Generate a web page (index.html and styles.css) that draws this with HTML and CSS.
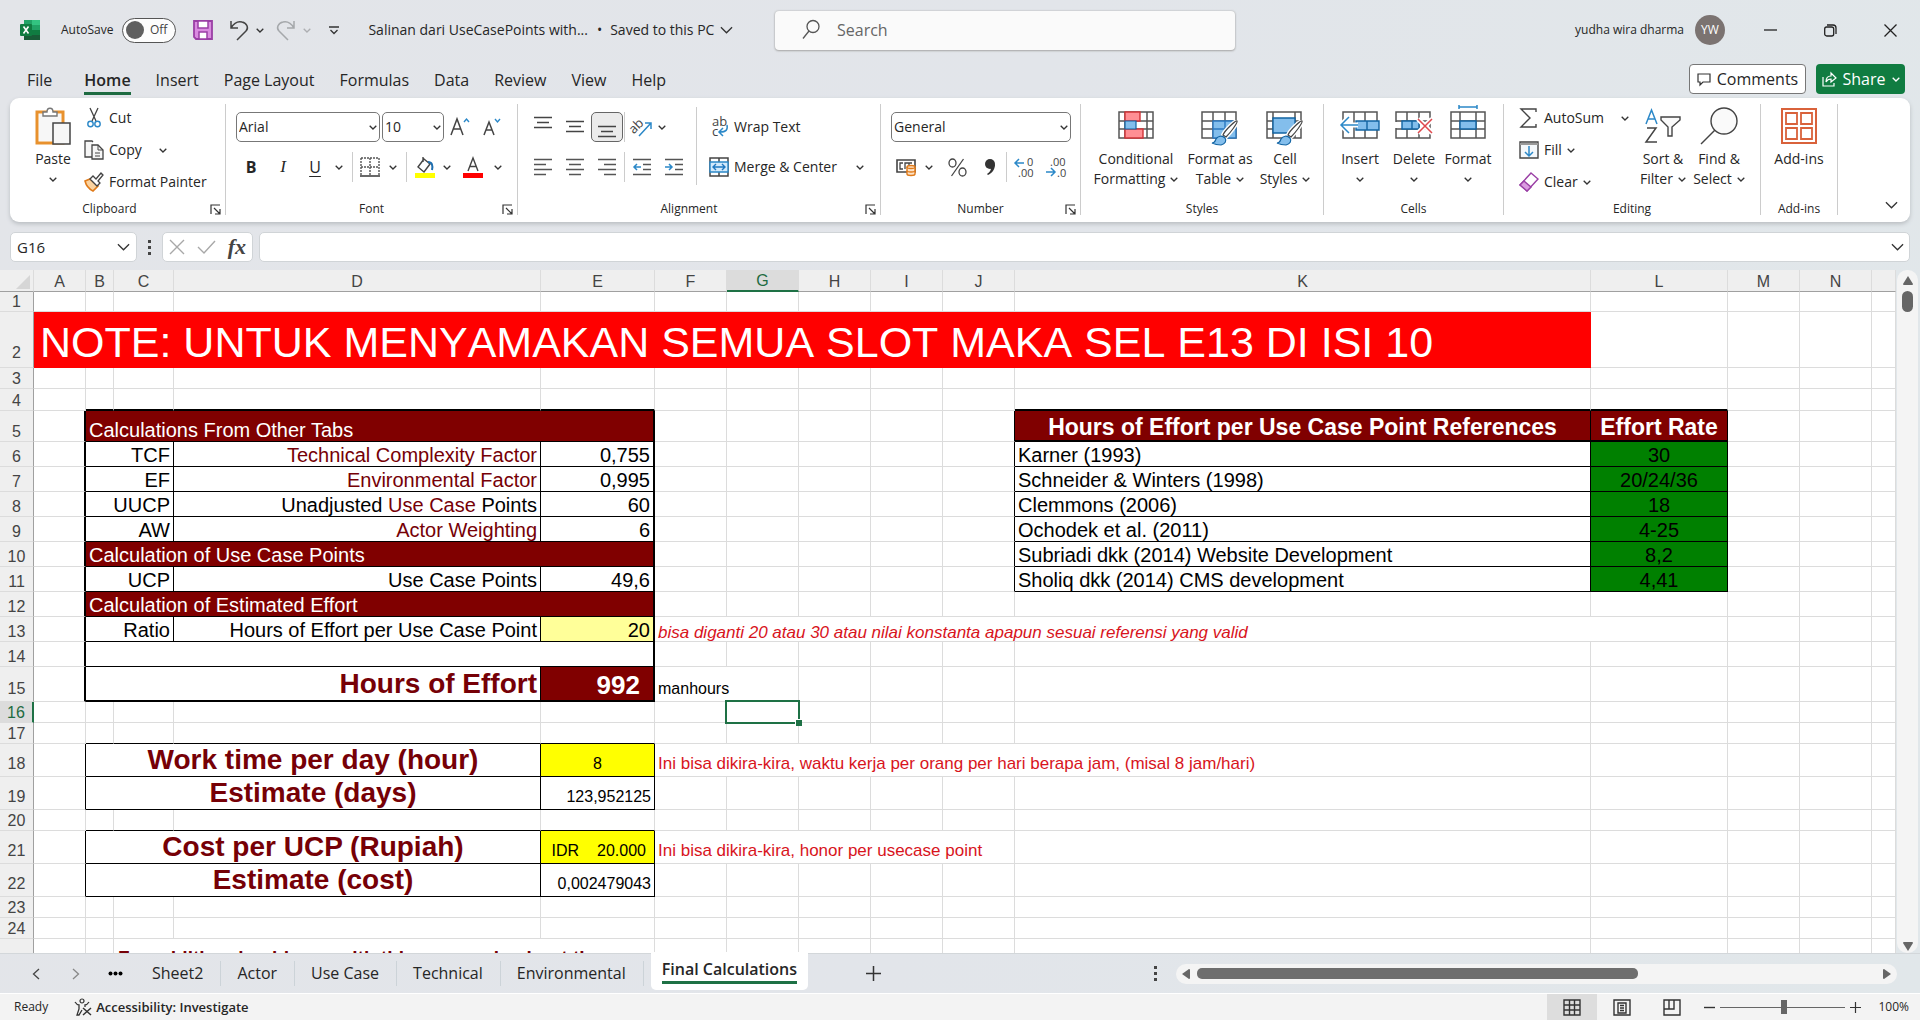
FILE: index.html
```html
<!DOCTYPE html>
<html lang="en">
<head>
<meta charset="utf-8">
<title>Salinan dari UseCasePoints - Excel</title>
<link rel="stylesheet" href="styles.css">
</head>
<body>
<svg class="defs" aria-hidden="true">
  <symbol id="chev" viewBox="0 0 8 5"><path d="M.7.7L4 4 7.300.7" fill="none" stroke="#333" stroke-width="1.300"/></symbol>
  <symbol id="chev-l" viewBox="0 0 14 8"><path d="M1 1l6 6 6-6" fill="none" stroke="#333" stroke-width="1.400"/></symbol>
  <symbol id="launch" viewBox="0 0 11 11"><path d="M1 10V1h9M4 4l6 6M10 5v5H5" fill="none" stroke="#333" stroke-width="1.200"/></symbol>
  <symbol id="grid" viewBox="0 0 36 28"><path d="M1 1h34v26H1zM1 10h34M1 18h34M7 1v26M29 1v26" fill="#fff" stroke="#555" stroke-width="1.500"/></symbol>
  <symbol id="brush" viewBox="0 0 28 26"><path d="M26 1c-1-1-12 9-14 14l3 2C19 13 27 3 26 1z" fill="#fff" stroke="#fff" stroke-width="4"/><path d="M26 1c-1-1-12 9-14 14l3 2C19 13 27 3 26 1z" fill="#fff" stroke="#444" stroke-width="1.200"/><path d="M1 23c3 0 3-2 4-4 2-3 6-4 9-1 2 3 0 6-4 7-3 0-7-1-9-2z" fill="#83beec" stroke="#1264a3" stroke-width="1.200"/></symbol>
</svg>

<header class="titlebar">
  <svg class="logo" width="20" height="20" viewBox="0 0 20 20"><path d="M4 0h8v10H4z" fill="#21a366"/><path d="M12 0h8v5h-8z" fill="#33c481"/><path d="M12 5h8v5h-8z" fill="#21a366"/><path d="M4 10h8v5H4z" fill="#107c41"/><path d="M12 10h8v5h-8z" fill="#107c41"/><path d="M4 15h16v5H4z" fill="#185c37"/><rect y="4" width="12" height="12" rx="1" fill="#107c41"/><path d="M3.500 6.500l5 7M8.500 6.500l-5 7" stroke="#fff" stroke-width="1.600"/></svg>
  <label class="autosave"><span>AutoSave</span><span class="switch"><input type="checkbox"><i></i><b>Off</b></span></label>
  <button class="icon save" aria-label="Save"><svg width="20" height="20" viewBox="0 0 20 20"><path d="M1 1h18v18H3l-2-2z" fill="#da8be0" stroke="#9a3fa5" stroke-width="1.800"/><path d="M5 1h10v7H5zM6 12h8v7H6z" fill="#fff" stroke="#9a3fa5" stroke-width="1.500"/></svg></button>
  <button class="icon undo" aria-label="Undo"><svg width="20" height="21" viewBox="0 0 20 21"><path d="M2 1v7h7M2 8C5 3 9 1 13 2c5 1 7 6 4 9l-9 9" fill="none" stroke="#444" stroke-width="1.500"/></svg></button>
  <button class="icon drop" aria-label="Undo list"><svg width="8" height="5"><use href="#chev"/></svg></button>
  <button class="icon redo" aria-label="Redo" disabled><svg width="20" height="21" viewBox="0 0 20 21"><path d="M18 1v7h-7M18 8C15 3 11 1 7 2 2 3 0 8 3 11l9 9" fill="none" stroke="#a5a8ab" stroke-width="1.500"/></svg></button>
  <button class="icon drop faint" aria-label="Redo list" disabled><svg width="8" height="5"><use href="#chev"/></svg></button>
  <button class="icon custom" aria-label="Customize toolbar"><svg width="10" height="9" viewBox="0 0 10 9"><path d="M0 1h10M1.500 4L5 7.500 8.500 4" fill="none" stroke="#333" stroke-width="1.300"/></svg></button>
  <button class="filename">Salinan dari UseCasePoints with... <span>•</span> Saved to this PC <svg width="13" height="8"><use href="#chev-l"/></svg></button>
  <label class="search"><svg width="18" height="21" viewBox="0 0 18 21"><circle cx="11" cy="7.500" r="6" fill="none" stroke="#555" stroke-width="1.300"/><path d="M7 12L1 19.500" stroke="#555" stroke-width="1.300"/></svg><input type="text" placeholder="Search" aria-label="Search"></label>
  <div class="account"><span>yudha wira dharma</span><span class="avatar">YW</span></div>
  <div class="window">
    <button aria-label="Minimize"><svg width="13" height="13" viewBox="0 0 13 13"><path d="M0 6h13" stroke="#222" stroke-width="1.300"/></svg></button>
    <button aria-label="Restore"><svg width="13" height="13" viewBox="0 0 13 13"><rect x=".7" y="3" width="9" height="9" rx="2" fill="none" stroke="#222" stroke-width="1.300"/><path d="M3 1h6q3 0 3 3v6" fill="none" stroke="#222" stroke-width="1.300"/></svg></button>
    <button aria-label="Close"><svg width="13" height="13" viewBox="0 0 13 13"><path d="M.5.5l12 12M12.500.5l-12 12" stroke="#222" stroke-width="1.300"/></svg></button>
  </div>
</header>

<nav class="menu">
  <a href="#" class="file">File</a><a href="#" class="on">Home</a><a href="#">Insert</a><a href="#">Page Layout</a><a href="#">Formulas</a><a href="#">Data</a><a href="#">Review</a><a href="#">View</a><a href="#">Help</a>
  <button class="comments"><svg width="14" height="13" viewBox="0 0 14 13"><path d="M1 1h12v8H6l-3 3V9H1z" fill="none" stroke="#333" stroke-width="1.200"/></svg>Comments</button>
  <button class="share"><svg width="15" height="15" viewBox="0 0 15 15"><path d="M1 5v9h11v-3M4 10c0-4 2-6 5-6V1l5 5-5 4V7C7 7 5 8 4 10z" fill="none" stroke="#fff" stroke-width="1.200"/></svg>Share<svg class="white" width="8" height="5"><use href="#chev"/></svg></button>
</nav>

<section class="ribbon">
  <div class="group clipboard">
    <div class="body">
      <button class="big"><svg width="36" height="38" viewBox="0 0 36 38"><path d="M2 5h26v31H2z" fill="#fff" stroke="#e8912d" stroke-width="3"/><path d="M4 7h22v27H4z" fill="#f7f7f7"/><path d="M8 9V5h4c0-5 6-5 6 0h4v4z" fill="#fff" stroke="#777" stroke-width="1.400"/><path d="M18 16h17v21H18z" fill="#f7f7f7" stroke="#444" stroke-width="1.500"/></svg><span>Paste</span><svg width="8" height="5"><use href="#chev"/></svg></button>
      <div class="list">
        <button><svg width="20" height="20" viewBox="0 0 20 20"><path d="M6 0l6 13M14 0L8 13" stroke="#444" stroke-width="1.300"/><circle cx="6.500" cy="16" r="2.700" fill="none" stroke="#2b88c8" stroke-width="1.400"/><circle cx="13.500" cy="16" r="2.700" fill="none" stroke="#2b88c8" stroke-width="1.400"/></svg>Cut</button>
        <button><svg width="20" height="20" viewBox="0 0 20 20"><path d="M8 17H1V1h7l1 1M8 5h6l5 5v9H8z" fill="#f6f6f6" stroke="#444" stroke-width="1.300"/><path d="M14 5v5h5M11 13h5M11 16h5" fill="none" stroke="#444"/></svg>Copy<svg class="after" width="8" height="5"><use href="#chev"/></svg></button>
        <button><svg width="20" height="20" viewBox="0 0 20 20"><path d="M1 9l5-2 8 7-5 5C5 17 2 13 1 9z" fill="#fbd3a0" stroke="#e07b1a" stroke-width="1.600"/><path d="M6 7l3-3 3 3 5-6 2 2-5 6 2 2-3 3z" fill="#fff" stroke="#444" stroke-width="1.300"/></svg>Format Painter</button>
      </div>
    </div>
    <div class="foot"><span>Clipboard</span><button aria-label="Clipboard options"><svg width="11" height="11"><use href="#launch"/></svg></button></div>
  </div>

  <div class="group font">
    <div class="body rows">
      <div class="row top">
        <span class="combo name"><select aria-label="Font"><option>Arial</option></select><svg width="8" height="5"><use href="#chev"/></svg></span>
        <span class="combo size"><select aria-label="Font size"><option>10</option></select><svg width="8" height="5"><use href="#chev"/></svg></span>
        <button aria-label="Increase font size"><svg width="20" height="20" viewBox="0 0 20 20"><path d="M1 18L7 2l6 16M3 12h8" fill="none" stroke="#444" stroke-width="1.500"/><path d="M14 5l2.500-3L19 5" fill="none" stroke="#2b88c8" stroke-width="1.400"/></svg></button>
        <button aria-label="Decrease font size"><svg width="20" height="20" viewBox="0 0 20 20"><path d="M2 18L7 5l5 13M4 13h6" fill="none" stroke="#444" stroke-width="1.500"/><path d="M13 2l2.500 3L18 2" fill="none" stroke="#2b88c8" stroke-width="1.400"/></svg></button>
      </div>
      <div class="row bottom">
        <button class="b">B</button><button class="i">I</button><button class="u">U</button><button aria-label="Underline styles"><svg width="8" height="5"><use href="#chev"/></svg></button><i class="sep"></i>
        <button aria-label="Borders"><svg width="20" height="20" viewBox="0 0 20 20"><path d="M1 1h18v17M1 1v17M10 1v17M1 10h18" fill="none" stroke="#555" stroke-width="1.400" stroke-dasharray="2 1"/><path d="M0 19h20" stroke="#444" stroke-width="1.600"/></svg></button><button aria-label="Border styles"><svg width="8" height="5"><use href="#chev"/></svg></button><i class="sep"></i>
        <button aria-label="Fill color"><svg width="20" height="22" viewBox="0 0 20 22"><path d="M8 1v5M9 3L3 11l6 5 6-8z" fill="#fff" stroke="#444" stroke-width="1.400"/><path d="M13 6c4 0 5 3 4 8" fill="none" stroke="#1f6fb0" stroke-width="2"/><path d="M0 17h20v5H0z" fill="#ff0"/></svg></button><button aria-label="Fill colors"><svg width="8" height="5"><use href="#chev"/></svg></button>
        <button aria-label="Font color"><svg width="20" height="22" viewBox="0 0 20 22"><path d="M5 15l5-13 5 13M7 10.500h6" fill="none" stroke="#444" stroke-width="1.400"/><path d="M0 17h20v5H0z" fill="#f00"/></svg></button><button aria-label="Font colors"><svg width="8" height="5"><use href="#chev"/></svg></button>
      </div>
    </div>
    <div class="foot"><span>Font</span><button aria-label="Font options"><svg width="11" height="11"><use href="#launch"/></svg></button></div>
  </div>

  <div class="group alignment">
    <div class="body">
      <div class="rows aligns">
        <div class="row">
          <button aria-label="Top align"><svg width="18" height="24" viewBox="0 0 18 24"><path d="M0 2.500h18M3 7.500h12M0 12.500h18" stroke="#444" stroke-width="1.400"/></svg></button>
          <button aria-label="Middle align"><svg width="18" height="24" viewBox="0 0 18 24"><path d="M0 6.500h18M3 11.500h12M0 16.500h18" stroke="#444" stroke-width="1.400"/></svg></button>
          <button aria-label="Bottom align" class="pressed"><svg width="18" height="24" viewBox="0 0 18 24"><path d="M0 11.500h18M3 16.500h12M0 21.500h18" stroke="#444" stroke-width="1.400"/></svg></button><i class="sep"></i>
          <button aria-label="Orientation"><svg width="20" height="20" viewBox="0 0 20 20"><text x="-3" y="12" transform="rotate(-45 6 9)" font-size="13" fill="#444">ab</text><path d="M7 19L19 6M13 6h6v6" fill="none" stroke="#2b88c8" stroke-width="1.500"/></svg></button><button class="start" aria-label="Orientation list"><svg width="8" height="5"><use href="#chev"/></svg></button>
        </div>
        <div class="row">
          <button aria-label="Align left"><svg width="18" height="18" viewBox="0 0 18 18"><path d="M0 1.500h18M0 6.500h12M0 11.500h18M0 16.500h12" stroke="#555" stroke-width="1.400"/></svg></button>
          <button aria-label="Center"><svg width="18" height="18" viewBox="0 0 18 18"><path d="M0 1.500h18M3 6.500h12M0 11.500h18M3 16.500h12" stroke="#555" stroke-width="1.400"/></svg></button>
          <button aria-label="Align right"><svg width="18" height="18" viewBox="0 0 18 18"><path d="M0 1.500h18M6 6.500h12M0 11.500h18M6 16.500h12" stroke="#555" stroke-width="1.400"/></svg></button><i class="sep"></i>
          <button aria-label="Decrease indent"><svg width="18" height="18" viewBox="0 0 18 18"><path d="M0 1.500h18M10 6.500h8M10 11.500h8M0 16.500h18" stroke="#555" stroke-width="1.400"/><path d="M8 9H1M4 6L1 9l3 3" fill="none" stroke="#2b88c8" stroke-width="1.500"/></svg></button>
          <button aria-label="Increase indent"><svg width="18" height="18" viewBox="0 0 18 18"><path d="M0 1.500h18M10 6.500h8M10 11.500h8M0 16.500h18" stroke="#555" stroke-width="1.400"/><path d="M0 9h7M4 6l3 3-3 3" fill="none" stroke="#2b88c8" stroke-width="1.500"/></svg></button>
        </div>
      </div>
      <div class="rows wraps">
        <button><svg width="20" height="22" viewBox="0 0 20 22"><text x="3" y="10" font-size="13" fill="#444">ab</text><text x="3" y="20" font-size="13" fill="#444">c</text><path d="M18 9c1 5-1 7-7 7M14 12l-4 4 4 4" fill="none" stroke="#2b88c8" stroke-width="1.500"/></svg>Wrap Text</button>
        <button><svg width="20" height="20" viewBox="0 0 20 20"><path d="M1 1h18v18H1zM10 1v4M10 15v4" fill="#fff" stroke="#444" stroke-width="1.500"/><path d="M1 5h18v10H1z" fill="#d3eafb" stroke="#2b88c8" stroke-width="1.400"/><path d="M4 10h12M7 7l-3 3 3 3M13 7l3 3-3 3" fill="none" stroke="#1f78c0" stroke-width="1.400"/></svg>Merge &amp; Center<svg class="after" width="8" height="5"><use href="#chev"/></svg></button>
      </div>
    </div>
    <div class="foot"><span>Alignment</span><button aria-label="Alignment options"><svg width="11" height="11"><use href="#launch"/></svg></button></div>
  </div>

  <div class="group number">
    <div class="body rows">
      <div class="row top"><span class="combo format"><select aria-label="Number format"><option>General</option></select><svg width="8" height="5"><use href="#chev"/></svg></span></div>
      <div class="row bottom">
        <button aria-label="Accounting format"><svg width="20" height="20" viewBox="0 0 20 20"><path d="M1 3h18v12H1z" fill="#fff" stroke="#444" stroke-width="1.600"/><path d="M7 6H4v6h3M13 6H9v6M16 6h-3v3" fill="none" stroke="#444" stroke-width="1.300"/><path d="M11 10c0-2 8-2 8 0v7c0 2-8 2-8 0z" fill="#fde3c8" stroke="#e07b1a" stroke-width="1.400"/><path d="M11 10c0 2 8 2 8 0M11 13.500c0 2 8 2 8 0" fill="none" stroke="#e07b1a" stroke-width="1.300"/></svg></button><button aria-label="Accounting list"><svg width="8" height="5"><use href="#chev"/></svg></button>
        <button class="percent" aria-label="Percent style"><svg width="19" height="19" viewBox="0 0 19 19"><path d="M15.500 1l-12 17" stroke="#444" stroke-width="1.300"/><ellipse cx="4.500" cy="5" rx="3.500" ry="4" fill="none" stroke="#444" stroke-width="1.300"/><ellipse cx="14.500" cy="14" rx="3.500" ry="4" fill="none" stroke="#444" stroke-width="1.300"/></svg></button>
        <button aria-label="Comma style"><svg width="12" height="18" viewBox="0 0 12 18"><circle cx="6" cy="6" r="5" fill="#333"/><path d="M11 6c0 6-3 9-7 11l-1-1c3-2 4-4 4-6z" fill="#333"/></svg></button><i class="sep"></i>
        <button aria-label="Increase decimal"><svg width="20" height="20" viewBox="0 0 20 20"><text x="13" y="9" font-size="11" fill="#444">0</text><text x="4" y="20" font-size="11" fill="#444">.00</text><path d="M10 6H1M5 2L1 6l4 4" fill="none" stroke="#2b88c8" stroke-width="1.500"/></svg></button>
        <button aria-label="Decrease decimal"><svg width="20" height="20" viewBox="0 0 20 20"><text x="4" y="9" font-size="11" fill="#444">.00</text><text x="11" y="20" font-size="11" fill="#444">.0</text><path d="M0 15h9M5 11l4 4-4 4" fill="none" stroke="#2b88c8" stroke-width="1.500"/></svg></button>
      </div>
    </div>
    <div class="foot"><span>Number</span><button aria-label="Number options"><svg width="11" height="11"><use href="#launch"/></svg></button></div>
  </div>

  <div class="group styles">
    <div class="body bigs">
      <button class="big"><svg width="36" height="38" viewBox="0 -4 36 38"><use href="#grid" width="36" height="28"/><path d="M7 1h15v9H7zM7 18h18v9H7z" fill="#ff8f94" stroke="#d13438" stroke-width="1.400"/><path d="M7 10h11v8H7z" fill="#83beec" stroke="#1264a3" stroke-width="1.200"/></svg><span>Conditional</span><span>Formatting <svg width="8" height="5"><use href="#chev"/></svg></span></button>
      <button class="big"><svg width="38" height="38" viewBox="0 -4 38 38"><path d="M1 1h34v26H1zM1 10h34M1 18h34M12 1v26M24 1v26" fill="#fff" stroke="#555" stroke-width="1.500"/><path d="M12 10h23v17H12zM12 18h23M24 10v17" fill="#83beec" stroke="#2b78c0" stroke-width="1.400"/><use href="#brush" x="10" y="9" width="28" height="26"/></svg><span>Format as</span><span>Table <svg width="8" height="5"><use href="#chev"/></svg></span></button>
      <button class="big"><svg width="38" height="38" viewBox="0 -4 38 38"><use href="#grid" width="36" height="28"/><path d="M7 7h22v15H7z" fill="#83beec" stroke="#1264a3" stroke-width="1.400"/><use href="#brush" x="10" y="9" width="28" height="26"/></svg><span>Cell</span><span>Styles <svg width="8" height="5"><use href="#chev"/></svg></span></button>
    </div>
    <div class="foot"><span>Styles</span></div>
  </div>

  <div class="group cells">
    <div class="body bigs">
      <button class="big"><svg width="40" height="38" viewBox="0 -4 40 38"><path d="M3 1h34v26H3zM14 1v26M25 1v26" fill="#fff" stroke="#555" stroke-width="1.500"/><path d="M16 10h23v9H16zM27 10v9" fill="#83beec" stroke="#1264a3" stroke-width="1.400"/><path d="M18 14H2M9 6l-8 8 8 8" fill="none" stroke="#fff" stroke-width="5"/><path d="M18 14H2M9 6l-8 8 8 8" fill="none" stroke="#2b88c8" stroke-width="1.500"/></svg><span>Insert</span><svg width="8" height="5"><use href="#chev"/></svg></button>
      <button class="big"><svg width="38" height="38" viewBox="0 -4 38 38"><path d="M1 1h34v26H1zM1 10h34M1 18h34M12 1v26M24 1v26" fill="#fff" stroke="#555" stroke-width="1.500"/><path d="M0 11h8v6H0z" fill="#fff"/><path d="M7 10h17v8H7zM17 10v8" fill="#83beec" stroke="#1264a3" stroke-width="1.400"/><path d="M23 8l14 14M37 8L23 22" stroke="#fff" stroke-width="5"/><path d="M23 8l14 14M37 8L23 22" stroke="#e0484c" stroke-width="1.500"/></svg><span>Delete</span><svg width="8" height="5"><use href="#chev"/></svg></button>
      <button class="big"><svg width="36" height="38" viewBox="0 -4 36 38"><path d="M1 1h34v26H1zM1 10h34M1 18h34M10 1v26M26 1v26" fill="#fff" stroke="#555" stroke-width="1.500"/><path d="M10 10h16v8H10z" fill="#83beec" stroke="#1264a3" stroke-width="1.400"/><path d="M9-4h18M9-6v4M27-6v4" stroke="#2b88c8" stroke-width="1.500"/></svg><span>Format</span><svg width="8" height="5"><use href="#chev"/></svg></button>
    </div>
    <div class="foot"><span>Cells</span></div>
  </div>

  <div class="group editing">
    <div class="body">
      <div class="list">
        <button><svg width="20" height="20" viewBox="0 0 20 20"><path d="M17 4V1H2l9 9-9 9h15v-3" fill="none" stroke="#444" stroke-width="1.400"/></svg>AutoSum<svg class="after" width="8" height="5"><use href="#chev"/></svg></button>
        <button><svg width="20" height="20" viewBox="0 0 20 20"><path d="M1 2h18v16H1z" fill="#f4f8fb" stroke="#444" stroke-width="1.400"/><path d="M1 4h18" stroke="#999" stroke-width="2"/><path d="M10 6v10M6 12l4 4 4-4" fill="none" stroke="#2b88c8" stroke-width="1.500"/></svg>Fill<svg width="8" height="5"><use href="#chev"/></svg></button>
        <button><svg width="20" height="20" viewBox="0 0 20 20"><path d="M12 1l7 6L8 19l-7-6z" fill="#fff" stroke="#9a3fa5" stroke-width="1.400"/><path d="M5 9l7 6-4 4-7-6z" fill="#da9be0" stroke="#9a3fa5" stroke-width="1.400"/></svg>Clear<svg width="8" height="5"><use href="#chev"/></svg></button>
      </div>
      <button class="big sort"><svg width="36" height="38" viewBox="0 0 36 38"><path d="M1 17L6.500 3 12 17M3 12h7" fill="none" stroke="#2b88c8" stroke-width="1.500"/><path d="M2 21h9L1 35h11" fill="none" stroke="#444" stroke-width="1.500"/><path d="M16 10h19v3l-8 7v9h-4v-9l-7-7z" fill="#fafafa" stroke="#444" stroke-width="1.400"/></svg><span>Sort &amp;</span><span>Filter <svg width="8" height="5"><use href="#chev"/></svg></span></button>
      <button class="big find"><svg width="38" height="38" viewBox="0 0 38 38"><circle cx="24" cy="14" r="13" fill="#fafafa" stroke="#444" stroke-width="1.400"/><path d="M15 23L1 37" stroke="#444" stroke-width="1.500"/></svg><span>Find &amp;</span><span>Select <svg width="8" height="5"><use href="#chev"/></svg></span></button>
    </div>
    <div class="foot"><span>Editing</span></div>
  </div>

  <div class="group addins">
    <div class="body">
      <button class="big"><svg width="36" height="38" viewBox="0 0 36 38"><g fill="#fff" stroke="#d9623b"><path d="M1 2h34v34H1z" stroke-width="2"/><path d="M5 6h11v11H5zM20 6h11v11H20zM5 21h11v11H5zM20 21h11v11H20z" stroke-width="1.800"/></g></svg><span>Add-ins</span></button>
    </div>
    <div class="foot"><span>Add-ins</span></div>
  </div>
  <button class="collapse" aria-label="Collapse ribbon"><svg width="13" height="8"><use href="#chev-l"/></svg></button>
</section>

<section class="formula">
  <label class="namebox"><input type="text" value="G16" aria-label="Name box"><svg width="13" height="8"><use href="#chev-l"/></svg></label>
  <span class="grip"><i></i><i></i><i></i></span>
  <div class="fxbox">
    <button aria-label="Cancel"><svg width="16" height="16" viewBox="0 0 16 16"><path d="M1 1l14 14M15 1L1 15" stroke="#a8a8a8" stroke-width="1.400"/></svg></button>
    <button aria-label="Enter"><svg width="19" height="14" viewBox="0 0 19 14"><path d="M1 7l6 6L18 1" fill="none" stroke="#a8a8a8" stroke-width="1.400"/></svg></button>
    <button class="fx">fx</button>
  </div>
  <label class="entry"><input type="text" aria-label="Formula bar"><svg width="13" height="8"><use href="#chev-l"/></svg></label>
</section>

<main class="work">
  <div class="sheet">
    <table>
      <colgroup><col class="w-h"><col class="w-a"><col class="w-b"><col class="w-c"><col class="w-d"><col class="w-e"><col class="w-f"><col class="w-f"><col class="w-f"><col class="w-f"><col class="w-f"><col class="w-k"><col class="w-l"><col class="w-f"><col class="w-f"><col></colgroup>
      <thead><tr><th class="corner"><svg width="14" height="14" viewBox="0 0 14 14"><path d="M14 0v14H0z" fill="#d6d6d6"/></svg></th><th>A</th><th>B</th><th>C</th><th>D</th><th>E</th><th>F</th><th class="cur">G</th><th>H</th><th>I</th><th>J</th><th>K</th><th>L</th><th>M</th><th>N</th><th></th></tr></thead>
      <tbody>
      <tr class="h20"><th>1</th><td><td><td><td><td><td><td><td><td><td><td><td><td><td><td></tr>
      <tr class="h56"><th>2</th><td colspan="11" class="banner">NOTE: UNTUK MENYAMAKAN SEMUA SLOT MAKA SEL E13 DI ISI 10</td><td><td><td><td></tr>
      <tr class="h21"><th>3</th><td><td><td><td><td><td><td><td><td><td><td><td><td><td><td></tr>
      <tr class="h22"><th>4</th><td><td class="bb2"><td class="bb2"><td class="bb2"><td class="bb2"><td><td><td><td><td><td class="bb2"><td class="bb2"><td><td><td></tr>
      <tr class="h31"><th>5</th><td class="br2"><td colspan="4" class="head bk br2">Calculations From Other Tabs</td><td><td><td><td><td class="br1"><td class="reftitle bk thick">Hours of Effort per Use Case Point References</td><td class="reftitle bk thick">Effort Rate</td><td><td><td></tr>
      <tr><th>6</th><td class="br2"><td colspan="2" class="num bk">TCF</td><td class="num bk red">Technical Complexity Factor</td><td class="num bk br2">0,755</td><td><td><td><td><td class="br1"><td class="ref bk">Karner (1993)</td><td class="rate bk">30</td><td><td><td></tr>
      <tr><th>7</th><td class="br2"><td colspan="2" class="num bk">EF</td><td class="num bk red">Environmental Factor</td><td class="num bk br2">0,995</td><td><td><td><td><td class="br1"><td class="ref bk">Schneider &amp; Winters (1998)</td><td class="rate bk">20/24/36</td><td><td><td></tr>
      <tr><th>8</th><td class="br2"><td colspan="2" class="num bk">UUCP</td><td class="num bk">Unadjusted <span class="red">Use Case</span> Points</td><td class="num bk br2">60</td><td><td><td><td><td class="br1"><td class="ref bk">Clemmons (2006)</td><td class="rate bk">18</td><td><td><td></tr>
      <tr><th>9</th><td class="br2"><td colspan="2" class="num bk">AW</td><td class="num bk red">Actor Weighting</td><td class="num bk br2">6</td><td><td><td><td><td class="br1"><td class="ref bk">Ochodek et al. (2011)</td><td class="rate bk">4-25</td><td><td><td></tr>
      <tr><th>10</th><td class="br2"><td colspan="4" class="head bk br2">Calculation of Use Case Points</td><td><td><td><td><td class="br1"><td class="ref bk">Subriadi dkk (2014) Website Development</td><td class="rate bk">8,2</td><td><td><td></tr>
      <tr><th>11</th><td class="br2"><td colspan="2" class="num bk">UCP</td><td class="num bk">Use Case Points</td><td class="num bk br2">49,6</td><td><td><td><td><td class="br1"><td class="ref bk">Sholiq dkk (2014) CMS development</td><td class="rate bk">4,41</td><td><td><td></tr>
      <tr><th>12</th><td class="br2"><td colspan="4" class="head bk br2">Calculation of Estimated Effort</td><td><td><td><td><td><td><td><td><td><td></tr>
      <tr><th>13</th><td class="br2"><td colspan="2" class="num bk">Ratio</td><td class="num bk">Hours of Effort per Use Case Point</td><td class="num bk br2 pale">20</td><td colspan="7" class="note"><em>bisa diganti 20 atau 30 atau nilai konstanta apapun sesuai referensi yang valid</em></td><td><td><td></tr>
      <tr><th>14</th><td class="br2"><td colspan="4" class="bk br2"></td><td><td><td><td><td><td><td><td><td><td></tr>
      <tr class="h35"><th>15</th><td class="br2"><td colspan="3" class="title right bk bb2">Hours of Effort</td><td class="total bk bb2 br2">992</td><td colspan="2">manhours</td><td><td><td><td><td><td><td><td></tr>
      <tr class="h21"><th class="cur">16</th><td><td><td><td><td><td><td class="active"><td><td><td><td><td><td><td><td></tr>
      <tr class="h21"><th>17</th><td><td class="bb1"><td class="bb1"><td class="bb1"><td class="bb1"><td><td><td><td><td><td><td><td><td><td></tr>
      <tr class="h33"><th>18</th><td class="br1"><td colspan="3" class="title bk">Work time per day (hour)</td><td class="bk yellow center">8</td><td colspan="6" class="note">Ini bisa dikira-kira, waktu kerja per orang per hari berapa jam, (misal 8 jam/hari)</td><td><td><td><td></tr>
      <tr class="h33"><th>19</th><td class="br1"><td colspan="3" class="title bk">Estimate (days)</td><td class="bk right">123,952125</td><td><td><td><td><td><td><td><td><td><td></tr>
      <tr class="h21"><th>20</th><td><td class="bb1"><td class="bb1"><td class="bb1"><td class="bb1"><td><td><td><td><td><td><td><td><td><td></tr>
      <tr class="h33"><th>21</th><td class="br1"><td colspan="3" class="title bk">Cost per UCP (Rupiah)</td><td class="bk yellow money"><span>IDR</span><span>20.000</span></td><td colspan="5" class="note">Ini bisa dikira-kira, honor per usecase point</td><td><td><td><td><td></tr>
      <tr class="h33"><th>22</th><td class="br1"><td colspan="3" class="title bk">Estimate (cost)</td><td class="bk right">0,002479043</td><td><td><td><td><td><td><td><td><td><td></tr>
      <tr class="h21"><th>23</th><td><td><td><td><td><td><td><td><td><td><td><td><td><td><td></tr>
      <tr class="h21"><th>24</th><td><td><td><td><td><td><td><td><td><td><td><td><td><td><td></tr>
      <tr class="h33"><th></th><td><td><td colspan="3" class="guide">For additional guidance with this approach, about the</td><td><td><td><td><td><td><td><td><td><td></tr>
      </tbody>
    </table>
  </div>
  <div class="vscroll"><svg width="12" height="10" viewBox="0 0 12 10"><path d="M6 0l5 8q0 1-1 1H2q-1 0-1-1z" fill="#666"/></svg><i></i><svg class="end" width="12" height="10" viewBox="0 0 12 10"><path d="M6 10L1 2q0-1 1-1h8q1 0 1 1z" fill="#666"/></svg></div>
</main>

<nav class="sheets">
  <button class="prev" aria-label="Previous sheet"><svg width="8" height="12" viewBox="0 0 8 12"><path d="M7 1L1.500 6 7 11" fill="none" stroke="#444" stroke-width="1.300"/></svg></button>
  <button class="prev" aria-label="Next sheet"><svg width="8" height="12" viewBox="0 0 8 12"><path d="M1 1l5.500 5L1 11" fill="none" stroke="#888" stroke-width="1.300"/></svg></button>
  <button class="more" aria-label="More sheets"><svg width="15" height="5" viewBox="0 0 15 5"><circle cx="2.500" cy="2.500" r="2"/><circle cx="7.500" cy="2.500" r="2"/><circle cx="12.500" cy="2.500" r="2"/></svg></button>
  <a href="#">Sheet2</a><a href="#">Actor</a><a href="#">Use Case</a><a href="#">Technical</a><a href="#">Environmental</a><a href="#" class="on"><span>Final Calculations</span></a>
  <button class="add" aria-label="New sheet"><svg width="15" height="15" viewBox="0 0 15 15"><path d="M7.500 0v15M0 7.500h15" stroke="#333" stroke-width="1.500"/></svg></button>
  <span class="grip"><i></i><i></i><i></i></span>
  <div class="hscroll"><svg width="9" height="12" viewBox="0 0 9 12"><path d="M0 6l7-5q1 0 1 1v8q0 1-1 1z" fill="#666"/></svg><div class="track"><i></i></div><svg width="9" height="12" viewBox="0 0 9 12"><path d="M9 6L2 1Q1 1 1 2v8q0 1 1 1z" fill="#666"/></svg></div>
</nav>

<footer class="status">
  <span>Ready</span>
  <button class="access"><svg width="18" height="18" viewBox="0 0 18 18"><circle cx="8" cy="3" r="2" fill="none" stroke="#333" stroke-width="1.200"/><path d="M1 4c2 3 4 3 4 3v4l-2 6h2l3-5M15 4c-2 3-4 3-4 3v2" fill="none" stroke="#333" stroke-width="1.300"/><path d="M9 10l8 7M17 10l-8 7" stroke="#333" stroke-width="1.500"/></svg>Accessibility: Investigate</button>
  <div class="views">
    <button class="on" aria-label="Normal"><svg width="18" height="17" viewBox="0 0 18 17"><path d="M1 1h16v15H1zM1 6h16M1 11h16M6.500 1v15M11.500 1v15" fill="none" stroke="#333" stroke-width="1.400"/></svg></button>
    <button aria-label="Page layout"><svg width="18" height="17" viewBox="0 0 18 17"><path d="M1 1h16v15H1zM5 4h8v10H5zM7 6.500h4M7 9h4M7 11.500h4" fill="none" stroke="#333" stroke-width="1.400"/></svg></button>
    <button aria-label="Page break"><svg width="18" height="17" viewBox="0 0 18 17"><path d="M1 1h16v15H1zM1 10h10V1M6 1v9" fill="none" stroke="#333" stroke-width="1.400"/></svg></button>
  </div>
  <button class="zoom" aria-label="Zoom out"><svg width="11" height="11" viewBox="0 0 11 11"><path d="M0 5.500h11" stroke="#333" stroke-width="1.400"/></svg></button>
  <input type="range" min="0" max="200" value="101" aria-label="Zoom">
  <button class="zoom" aria-label="Zoom in"><svg width="11" height="11" viewBox="0 0 11 11"><path d="M0 5.500h11M5.500 0v11" stroke="#333" stroke-width="1.200"/></svg></button>
  <span class="pct">100%</span>
</footer>
</body>
</html>
```
FILE: styles.css
```css
* { box-sizing: border-box; }
body {
  margin: 0;
  height: 100vh;
  overflow: hidden;
  display: flex;
  flex-direction: column;
  background: linear-gradient(100deg, #e3e5e9 0%, #e2e5ea 50%, #e1e7ea 100%);
  color: #262626;
  font: 14px/20px "Open Sans", "Noto Sans", sans-serif;
}
button, input, select { font: inherit; color: inherit; background: none; border: 0; padding: 0; margin: 0; outline: 0; }
button { display: inline-flex; align-items: center; justify-content: center; white-space: nowrap; }
a { color: inherit; text-decoration: none; }
svg { flex: none; display: block; overflow: visible; }
.defs { width: 0; height: 0; position: absolute; }

/* title bar */
.titlebar { height: 60px; display: flex; align-items: center; padding-left: 20px; position: relative; flex: none; }
.autosave { display: flex; align-items: center; gap: 9px; margin-left: 21px; font-size: 12px; }
.switch { display: flex; align-items: center; width: 54px; height: 25px; border: 1px solid #555; border-radius: 13px; background: #fdfdfd; padding: 0 8px 0 3px; justify-content: space-between; }
.switch input { position: absolute; opacity: 0; }
.switch i { width: 18px; height: 18px; border-radius: 50%; background: #606060; }
.switch b { font-weight: 400; color: #444; }
.save { margin-left: 17px; }
.undo { margin-left: 16px; }
.redo { margin-left: 12px; }
.drop { margin-left: 7px; }
.faint { opacity: .3; }
.custom { margin-left: 18px; }
.filename { margin-left: 29px; }
.filename span { margin: 0 8px 0 9px; }
.filename svg { margin-left: 6px; }
.search {
  position: absolute; left: 50%; margin-left: -185px; top: 11px; width: 460px; height: 39px;
  background: #fafafa; border-radius: 4px; box-shadow: 0 0 2px #aaa, 0 1px 2px #aaa;
  display: flex; align-items: center; padding: 0 0 2px 27px; gap: 17px; font-size: 16px;
}
.search input { flex: 1; min-width: 0; }
.search input::placeholder { color: #666; opacity: 1; }
.account { margin-left: auto; display: flex; align-items: center; gap: 11px; font-size: 12px; }
.avatar { width: 30px; height: 30px; border-radius: 50%; background: #7b7371; color: #fff; display: grid; place-items: center; }
.window { display: flex; margin-left: 15px; }
.window button { width: 60px; height: 40px; }

/* ribbon tabs */
.menu { height: 38px; display: flex; align-items: flex-start; padding: 5px 15px 0 14px; font-size: 16px; flex: none; }
.menu a { height: 30px; line-height: 30px; margin: 0 12px 0 13px; }
.menu .file { margin-right: 19px; }
.menu .on { font-weight: 600; border-bottom: 3px solid #1e6b41; }
.comments, .share { height: 30px; border-radius: 4px; margin-top: -1px; }
.comments { margin-left: auto; width: 117px; background: #fff; border: 1px solid #777; gap: 6px; }
.share { margin-left: 10px; width: 89px; background: #107c41; color: #fff; gap: 6px; }
.white { filter: invert(1) brightness(2); }

/* ribbon */
.ribbon { height: 124px; margin: 0 10px; background: #fff; border-radius: 9px; box-shadow: 0 2px 4px #b9bdc1; display: flex; padding: 6px 0 7px; flex: none; }
.group { display: flex; flex-direction: column; border-right: 1px solid #ccc; flex: none; }
.body { height: 91px; flex: none; display: flex; padding-top: 3px; }
.foot { height: 20px; position: relative; text-align: center; line-height: 28px; font-size: 12px; }
.foot button { position: absolute; right: 4px; top: 9px; }
.clipboard { width: 216px; }
.font { width: 292px; }
.alignment { width: 363px; }
.number { width: 200px; }
.styles { width: 243px; }
.cells { width: 180px; }
.editing { width: 257px; }
.addins { width: 77px; }
.clipboard .foot { padding-right: 16px; }
.alignment .foot { padding-right: 20px; }
.big { flex-direction: column; justify-content: flex-start; height: 89px; }
.big > svg:first-child { margin-bottom: 4px; }
.big > span { display: flex; align-items: center; gap: 5px; height: 20px; }
.big > svg:last-child { margin-top: 8px; }
.clipboard .big { width: 50px; margin-left: 18px; }
.list { display: flex; flex-direction: column; margin-top: -5px; }
.list button { height: 32px; flex: none; justify-content: flex-start; gap: 5px; }
.clipboard .list { margin-left: 6px; }
.list .after { margin-left: 12px; }
.rows { display: flex; flex-direction: column; gap: 10px; padding-top: 8px; }
.row { height: 30px; display: grid; }
.sep { width: 1px; height: 30px; background: #ccc; justify-self: center; }
.combo { position: relative; display: block; }
.combo select { appearance: none; width: 100%; height: 30px; border: 1px solid #777; border-radius: 5px; padding-left: 2px; background: #fff; }
.combo svg { position: absolute; right: 3px; top: 13px; }
.font .top { grid-template-columns: 144px 64px 32px 32px; padding-left: 10px; }
.font .size { margin-left: 2px; }
.font .bottom { grid-template-columns: 32px 32px 32px 16px 10px 26px 20px 7px 30px 14px 38px 12px; padding-left: 9px; }
.b { font-weight: 700; font-size: 16px; }
.i { font: italic 17px/20px "Liberation Serif", serif; }
.u { text-decoration: underline; text-underline-offset: 3px; font-size: 16px; }
.alignment .rows { padding-top: 5px; }
.aligns .row { grid-template-columns: 32px 32px 32px 3px 32px 32px; padding-left: 9px; }
.pressed { border: 1px solid #666; border-radius: 5px; background: #ebebeb; }
.row .start { justify-content: flex-start; }
.wraps { margin-left: 6px; border-left: 1px solid #ccc; padding-left: 12px; height: 78px; align-items: flex-start; }
.wraps button { height: 30px; gap: 5px; }
.wraps .after { margin-left: 14px; }
.number .top { padding-left: 10px; grid-template-columns: 180px; }
.number .bottom { grid-template-columns: 34px 12px 44px 22px 10px 25px 40px; padding-left: 8px; }
.styles .bigs { display: grid; grid-template-columns: 96px 72px 58px; padding-left: 7px; }
.cells .bigs { display: grid; grid-template-columns: 54px 54px 54px; padding-left: 9px; }
.editing .list { width: 115px; margin-left: 15px; }
.editing .sort { width: 58px; }
.editing .find { width: 54px; }
.addins .big { width: 100%; }
.collapse { margin: auto 12px 6px auto; }

/* formula bar */
.formula { display: flex; height: 30px; margin: 10px 10px 8px; flex: none; }
.formula label, .fxbox { background: #fff; border: 1px solid #d0d4d7; border-radius: 5px; display: flex; align-items: center; }
.namebox { width: 127px; padding: 0 6px; font-size: 15px; }
.namebox input { flex: 1; min-width: 0; }
.grip { display: flex; flex-direction: column; gap: 3px; align-self: center; margin: 0 11px; }
.grip i { width: 3px; height: 3px; background: #444; }
.fxbox { width: 91px; justify-content: space-between; padding: 0 6px; }
.fx { font: italic bold 22px/24px "Liberation Serif", serif; color: #444; }
.entry { flex: 1; margin-left: 6px; padding: 0 5px 0 8px; }
.entry input { flex: 1; }

/* worksheet */
.work { flex: 1; min-height: 0; display: flex; }
.sheet { flex: 1; min-width: 0; overflow: hidden; background: #fff; }
table { table-layout: fixed; width: 100%; border-collapse: separate; border-spacing: 0; font: 16px/16px "Liberation Sans", Arial, sans-serif; color: #000; }
.w-h { width: 34px; }
.w-a { width: 52px; }
.w-b { width: 28px; }
.w-c { width: 60px; }
.w-d { width: 367px; }
.w-e { width: 114px; }
.w-f { width: 72px; }
.w-k { width: 576px; }
.w-l { width: 137px; }
td, th { height: 25px; padding: 0 3px; vertical-align: bottom; white-space: nowrap; border: 0 solid #dcdcdc; border-width: 0 1px 1px 0; text-align: left; }
th { background: #efefef; color: #444; font-weight: 400; text-align: center; padding: 0 0 1px; }
tbody th { border-right-color: #a0a0a0; }
thead th { height: 22px; padding: 2px 0 0; vertical-align: middle; border-bottom-color: #a0a0a0; }
th.corner { padding: 2px 3px 0 0; }
.corner svg { margin-left: auto; }
thead .cur { background: #dcdcdc; color: #1e6b41; border-bottom: 2px solid #1e7145; }
tbody .cur { background: #dcdcdc; color: #1e6b41; border-right: 2px solid #1e7145; }
.h20 > * { height: 20px; }
.h21 > * { height: 21px; }
.h22 > * { height: 22px; }
.h31 > * { height: 31px; }
.h33 > * { height: 33px; }
.h35 > * { height: 35px; }
.h56 > * { height: 56px; }
.h33 > *, .h35 > * { padding-bottom: 4px; }
.h56 th { padding-bottom: 6px; }
.banner { background: #f00; color: #fff; font-size: 43px; line-height: 50px; font-kerning: none; padding: 0 6px; border-color: #f00; }
.bk { border-color: #000; }
.bb1 { border-bottom-color: #000; }
.br1 { border-right-color: #000; }
.bb2 { border-bottom: 2px solid #000; }
.br2 { border-right: 2px solid #000; }
.head, .num, .ref, .rate { font-size: 20px; line-height: 21px; }
.head { background: #800000; color: #fff; }
.num { text-align: right; }
.rate { background: #008000; text-align: center; }
.red { color: #760006; }
.reftitle { background: #800000; color: #fff; font-size: 23px; line-height: 26px; font-weight: 700; text-align: center; }
.thick { border-bottom-width: 2px; }
.pale { background: #ffff99; }
.yellow { background: #ff0; }
.title { color: #760006; font-weight: 700; font-size: 28px; line-height: 30px; text-align: center; }
.h33 .title, .h35 .title, .h35 .total { padding-bottom: 1px; }
.right, .h35 .right { text-align: right; }
.center { text-align: center; }
.total { background: #800000; color: #fff; font-weight: 700; font-size: 26px; line-height: 28px; text-align: right; padding-right: 13px; }
.note { color: #d8141c; font-size: 17px; }
.money { text-align: right; padding-right: 8px; }
.money span + span { margin-left: 18px; }
.active { position: relative; }
.active::before { content: ""; position: absolute; inset: -2px; border: 2px solid #1e7145; }
.active::after { content: ""; position: absolute; right: -4px; bottom: -4px; width: 6px; height: 6px; background: #1e7145; border: 1px solid #fff; border-width: 1px 0 0 1px; }
.guide { color: #760006; font-weight: 700; font-size: 19px; line-height: 22px; }
.h33 .guide { padding: 0 4px 2px; }
.vscroll { width: 21px; margin: 0 2px 0 1px; background: #f4f4f4; border-radius: 10px; display: flex; flex-direction: column; align-items: center; padding: 6px 0 2px; }
.vscroll i { width: 11px; height: 21px; margin-top: 5px; border-radius: 6px; background: #666; }
.vscroll .end { margin-top: auto; }

/* sheet tabs */
.sheets { height: 41px; display: flex; align-items: center; padding-left: 16px; font-size: 16px; border-top: 1px solid #d3d7da; border-bottom: 1px solid #fff; flex: none; }
.sheets .prev { width: 40px; }
.more { width: 38px; }
.sheets a { height: 25px; line-height: 25px; padding: 0 17px 0 16px; border-right: 1px solid #ccd3d8; }
.sheets .more + a { padding-left: 18px; }
.sheets .on { height: 38px; margin: -6px 0 0 7px; padding: 5px 11px 0; background: #fff; border: 0; border-radius: 0 0 5px 5px; }
.on span { display: block; font-weight: 600; height: 27px; line-height: 24px; border-bottom: 3px solid #1e7145; }
.add { margin-left: 58px; }
.sheets .grip { margin: 0 19px 0 auto; }
.hscroll { width: 721px; margin-right: 23px; height: 20px; border-radius: 10px; background: #f4f4f4; display: flex; align-items: center; gap: 6px; padding: 0 6px; }
.track { flex: 1; }
.track i { display: block; width: 65%; height: 11px; border-radius: 5px; background: #6e6e6e; }

/* status bar */
.status { height: 26px; background: #f3f3f3; display: flex; align-items: center; font-size: 12px; padding: 0 11px 0 14px; flex: none; }
.access { font-weight: 600; font-size: 13px; gap: 4px; margin-left: 26px; }
.views { margin-left: auto; display: flex; height: 100%; }
.views button { width: 50px; }
.views .on { background: #ddd; }
.zoom { margin-left: 7px; }
.status input { appearance: none; width: 125px; height: 16px; margin: 0 0 0 5px; background: linear-gradient(#666, #666) center / 100% 1px no-repeat; }
.status input + .zoom { margin-left: 5px; }
.status input::-webkit-slider-thumb { appearance: none; width: 6px; height: 14px; background: #666; }
.pct { margin-left: 17px; }
```
